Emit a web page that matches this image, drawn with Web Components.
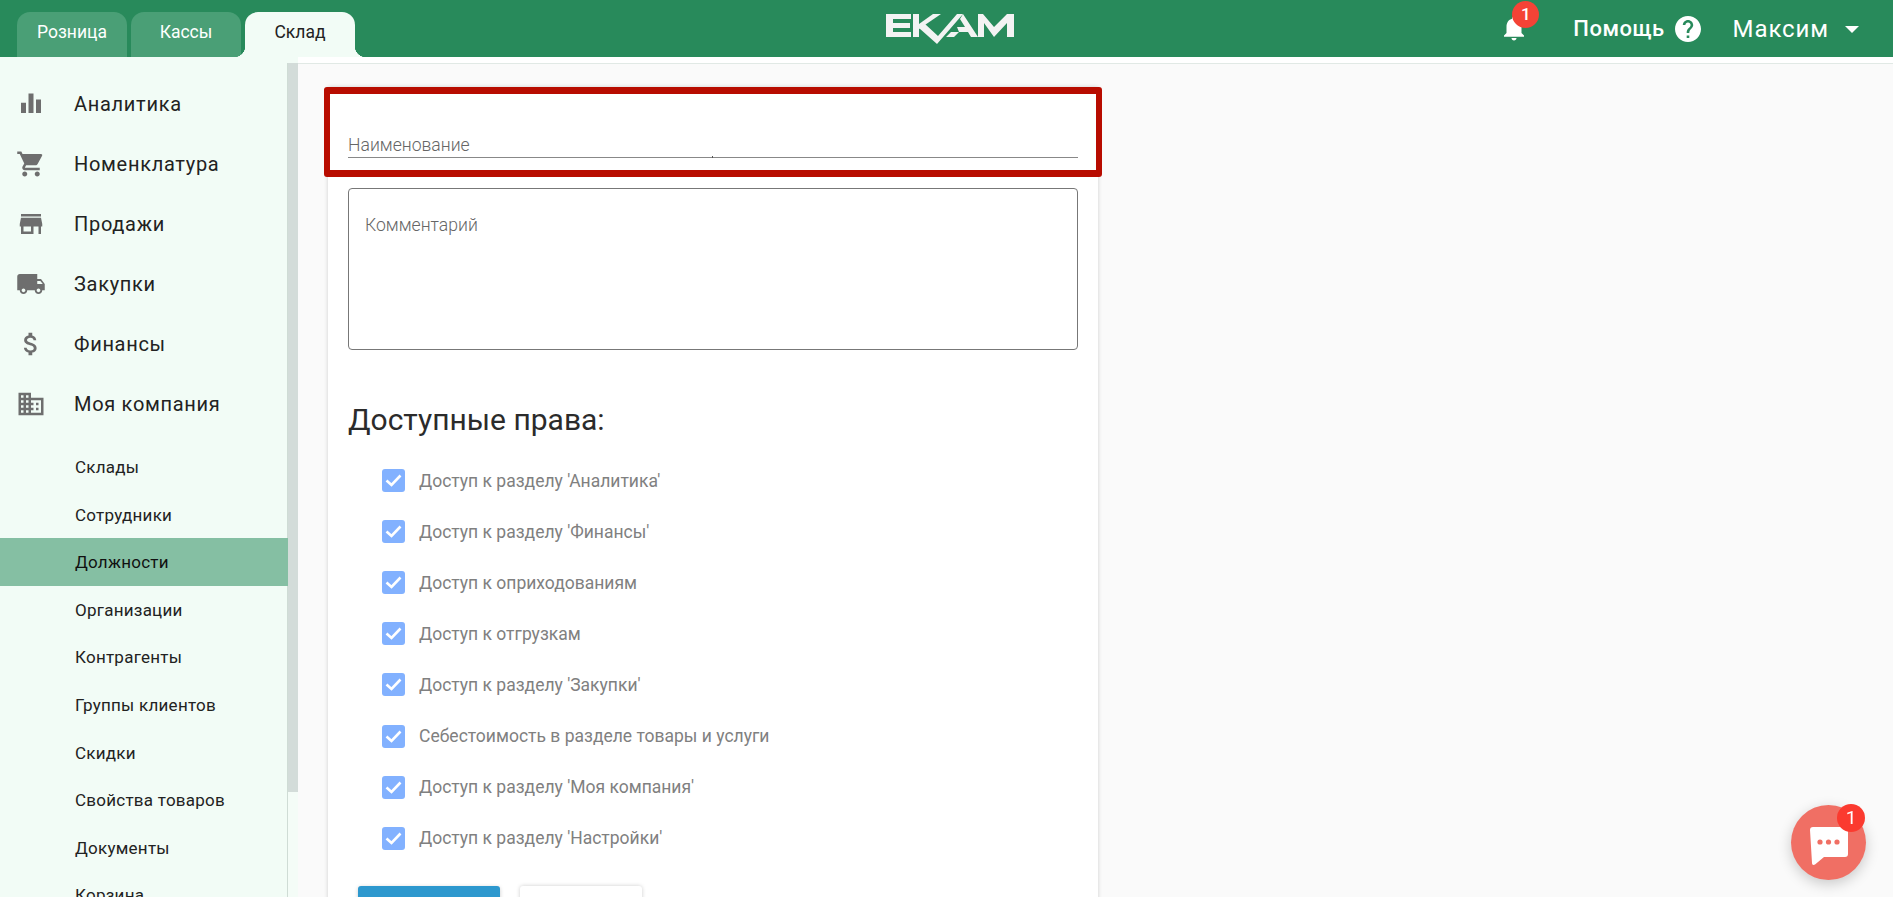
<!DOCTYPE html>
<html lang="ru">
<head>
<meta charset="UTF-8">
<title>Должности</title>
<style>
    html, body { margin: 0; height: 897px; overflow: hidden; background: #fafafa; }
    body { font-family: Roboto, "Liberation Sans", sans-serif; }
</style>
</head>
<body>
<app-shell>
    <top-bar slot="top"></top-bar>
    <side-menu slot="side"></side-menu>
    <role-form></role-form>
</app-shell>
<chat-bubble></chat-bubble>

<script>
    const icons = {
        chart: '<path d="M4 11h4v8.2H4zM10 3.5h4v15.7h-4zM16 8.3h4v10.9h-4z"/>',
        cart: '<path d="M7 18c-1.1 0-2 .9-2 2s.9 2 2 2 2-.9 2-2-.9-2-2-2zM1 2v2h2l3.6 7.59-1.35 2.45c-.16.28-.25.61-.25.96 0 1.1.9 2 2 2h12v-2H7.42c-.14 0-.25-.11-.25-.25l.03-.12.9-1.63h7.45c.75 0 1.41-.41 1.75-1.03l3.58-6.49A1 1 0 0 0 20 4H5.21l-.94-2H1zm16 16c-1.1 0-2 .9-2 2s.9 2 2 2 2-.9 2-2-.9-2-2-2z"/>',
        store: '<path d="M20 4H4v2h16V4zm1 10v-2l-1-5H4l-1 5v2h1v6h10v-6h4v6h2v-6h1zm-9 4H6v-4h6v4z"/>',
        truck: '<path d="M20 8h-3V4H3c-1.1 0-2 .9-2 2v11h2c0 1.66 1.34 3 3 3s3-1.34 3-3h6c0 1.66 1.34 3 3 3s3-1.34 3-3h2v-5l-3-4zM6 18.5c-.83 0-1.5-.67-1.5-1.5s.67-1.5 1.5-1.5 1.5.67 1.5 1.5-.67 1.5-1.5 1.5zm13.5-9l1.96 2.5H17V9.5h2.5zm-1.5 9c-.83 0-1.5-.67-1.5-1.5s.67-1.5 1.5-1.5 1.5.67 1.5 1.5-.67 1.5-1.5 1.5z"/>',
        dollar: '<path d="M11.8 10.9c-2.27-.59-3-1.2-3-2.15 0-1.09 1.01-1.85 2.7-1.85 1.78 0 2.44.85 2.5 2.1h2.21c-.07-1.72-1.12-3.3-3.21-3.81V3h-3v2.16c-1.94.42-3.5 1.68-3.5 3.61 0 2.31 1.91 3.46 4.7 4.13 2.5.6 3 1.48 3 2.41 0 .69-.49 1.79-2.7 1.79-2.06 0-2.87-.92-2.98-2.1h-2.2c.12 2.19 1.76 3.42 3.68 3.83V21h3v-2.15c1.95-.37 3.5-1.5 3.5-3.55 0-2.84-2.43-3.81-4.7-4.4z"/>',
        domain: '<path d="M12 7V3H2v18h20V7H12zM6 19H4v-2h2v2zm0-4H4v-2h2v2zm0-4H4V9h2v2zm0-4H4V5h2v2zm4 12H8v-2h2v2zm0-4H8v-2h2v2zm0-4H8V9h2v2zm0-4H8V5h2v2zm10 12h-8v-2h2v-2h-2v-2h2v-2h-2V9h8v10zm-2-8h-2v2h2v-2zm0 4h-2v2h2v-2z"/>'
    };

    const define = (name, css, html) => {
        customElements.define(name, class extends HTMLElement {
            constructor() {
                super();
                this.attachShadow({ mode: "open" }).innerHTML = "<style>" + css + "</style>" + (typeof html === "function" ? html(this) : html);
            }
        });
    };

    define("app-shell", `
        :host { display: grid; grid-template-columns: 298px 1fr; grid-template-rows: 57px 840px; height: 897px; overflow: hidden; }
        .top { grid-column: 1 / 3; }
        .main { overflow: hidden; background: #fafafa; border-top: 6px solid #fff; box-shadow: inset 0 1px 0 #e1e9e5; }
    `, `
        <div class="top"><slot name="top"></slot></div>
        <slot name="side"></slot>
        <div class="main"><slot></slot></div>
    `);

    define("top-bar", `
        :host { display: flex; align-items: flex-end; height: 57px; background: #288a5b; color: #fff; position: relative; }
        .tabs { display: flex; gap: 4px; padding-left: 17px; }
        .tab { width: 110px; height: 45px; box-sizing: border-box; padding-top: 8px; text-align: center; font-size: 17.5px; line-height: 24px; border-radius: 13px 13px 0 0; background: #4a9f76; }
        .tab.on { background: #f2fcf6; color: #222; position: relative; }
        .tab.on::before, .tab.on::after { content: ""; position: absolute; bottom: 0; width: 11px; height: 11px; }
        .tab.on::before { left: -11px; background: radial-gradient(circle at 0 0, transparent 11px, #f2fcf6 11.5px); }
        .tab.on::after { right: -11px; background: radial-gradient(circle at 100% 0, transparent 11px, #f2fcf6 11.5px); }
        .logo { position: absolute; left: 886px; top: 13px; }
        .right { margin-left: auto; height: 57px; display: flex; align-items: center; }
        .bell { position: relative; width: 30px; height: 30px; margin: -2px 44px 0 0; }
        .bell b { position: absolute; left: 13px; top: -12px; width: 27px; height: 27px; border-radius: 50%; background: #f44336; text-align: center; font: 500 17px/27px Roboto, sans-serif; }
        .help { font-size: 22px; font-weight: 500; letter-spacing: .5px; }
        .q { margin: 0 32px 0 10px; display: block; }
        .user { font-size: 24px; letter-spacing: .9px; }
        .caret { width: 0; height: 0; border: 7px solid transparent; border-top-color: #fff; border-bottom: 0; margin: 2px 34px 0 16px; }
    `, `
        <div class="tabs"><div class="tab">Розница</div><div class="tab">Кассы</div><div class="tab on">Склад</div></div>
        <svg class="logo" width="128" height="32" viewBox="0 0 128 32" fill="#f3f3f3">
            <path d="M0 1H25V6H7V10H24V15H7V19H25V24H0Z"/>
            <path d="M27 1h6v23h-6z"/>
            <path d="M33 11L47 1H55L33 16Z"/>
            <path d="M33 15L39 11L52 23L71 1H77L51 31Z"/>
            <path d="M77 1L92 24H85L82 19H65L60 24H68L73 19L71 14H79L74 6Z"/>
            <path d="M92 1H97L108 14L121 1H128V24H121V10L108 24L98 10V24H92Z"/>
        </svg>
        <div class="right">
            <div class="bell">
                <svg width="30" height="30" viewBox="0 0 24 24" fill="#fff"><path d="M12 22c1.1 0 2-.9 2-2h-4c0 1.1.9 2 2 2zm6-6v-5c0-3.07-1.63-5.64-4.5-6.32V4c0-.83-.67-1.5-1.5-1.5s-1.5.67-1.5 1.5v.68C7.64 5.36 6 7.92 6 11v5l-2 2v1h16v-1l-2-2z"/></svg>
                <b>1</b>
            </div>
            <span class="help">Помощь</span>
            <svg class="q" width="26" height="26" viewBox="2 2 20 20" fill="#fff"><path d="M12 2C6.48 2 2 6.48 2 12s4.48 10 10 10 10-4.48 10-10S17.52 2 12 2zm1 17h-2v-2h2v2zm2.07-7.75l-.9.92C13.45 12.9 13 13.5 13 15h-2v-.5c0-1.1.45-2.1 1.17-2.83l1.24-1.26c.37-.36.59-.86.59-1.41 0-1.1-.9-2-2-2s-2 .9-2 2H8c0-2.21 1.79-4 4-4s4 1.79 4 4c0 .88-.36 1.68-.93 2.25z"/></svg>
            <span class="user">Максим</span>
            <div class="caret"></div>
        </div>
    `);

    define("menu-item", `
        :host { display: flex; align-items: center; height: 60px; color: #222; font-size: 20px; letter-spacing: .7px; }
        svg { width: 30px; height: 30px; fill: #6e6e6e; margin-left: 16px; margin-right: 28px; flex: none; }
    `, (el) => `<svg viewBox="0 0 24 24">${icons[el.getAttribute("icon")]}</svg><slot></slot>`);

    define("sub-item", `
        :host { display: block; height: 47.6px; line-height: 48.6px; padding-left: 75px; color: #222; font-size: 17px; letter-spacing: .25px; }
        :host([active]) { background: #85bfa3; color: #111; margin-right: -1px; }
    `, `<slot></slot>`);

    define("side-menu", `
        :host { display: flex; height: 840px; overflow: hidden; background: #f2fcf6; border-top: 6px solid #f2fcf6; box-sizing: border-box; }
        .list { width: 288px; flex: none; box-sizing: border-box; padding-top: 11px; height: 100%; border-right: 1px solid #cfdcd5; }
        .sub { padding-top: 9px; }
        .track { flex: 1; background: #f4fcf7; }
        .thumb { height: 729px; background: #d3dcd9; }
    `, `
        <div class="list">
            <menu-item icon="chart">Аналитика</menu-item>
            <menu-item icon="cart">Номенклатура</menu-item>
            <menu-item icon="store">Продажи</menu-item>
            <menu-item icon="truck">Закупки</menu-item>
            <menu-item icon="dollar">Финансы</menu-item>
            <menu-item icon="domain">Моя компания</menu-item>
            <div class="sub">
                <sub-item>Склады</sub-item>
                <sub-item>Сотрудники</sub-item>
                <sub-item active>Должности</sub-item>
                <sub-item>Организации</sub-item>
                <sub-item>Контрагенты</sub-item>
                <sub-item>Группы клиентов</sub-item>
                <sub-item>Скидки</sub-item>
                <sub-item>Свойства товаров</sub-item>
                <sub-item>Документы</sub-item>
                <sub-item>Корзина</sub-item>
            </div>
        </div>
        <div class="track"><div class="thumb"></div></div>
    `);

    define("check-row", `
        :host { display: flex; align-items: center; height: 51.1px; color: #808080; font-size: 17.5px; padding-left: 54px; }
        .box { width: 23px; height: 23px; border-radius: 3px; background: #82b1ff; margin-right: 14px; flex: none; display: flex; align-items: center; justify-content: center; }
    `, `
        <div class="box"><svg width="17" height="13" viewBox="0 0 17 13" fill="none" stroke="#fff" stroke-width="2.6"><path d="M1.5 6.5l5 4.5 9-9.5"/></svg></div>
        <slot></slot>
    `);

    define("role-form", `
        :host { display: block; width: 770px; margin: 24px 0 0 30px; height: 830px; background: #fff; box-shadow: 0 0 4px rgba(0,0,0,.18); box-sizing: border-box; }
        .name { margin: 0 -4px; height: 90px; box-sizing: border-box; border-style: solid; border-color: #b80c00; border-width: 7px 6px; border-radius: 3px; background: #fff; padding: 40px 18px 0; position: relative; }
        .name div { height: 23px; line-height: 22px; font-size: 17.6px; font-weight: 300; color: #666; border-bottom: 1px solid #888; }
        .name i { position: absolute; left: 382px; top: 62px; width: 1px; height: 2px; background: #555; }
        .area { margin: 11px 20px 0; height: 162px; box-sizing: border-box; border: 1px solid #777; border-radius: 4px; padding: 25px 16px; font-size: 17.6px; font-weight: 300; color: #666; line-height: 22px; }
        h2 { margin: 0 20px; padding-top: 52px; font-size: 30px; line-height: 36px; font-weight: 400; color: #2b2b2b; }
        .list { padding-top: 17px; }
        .buttons { display: flex; gap: 20px; padding: 22px 30px 0; }
        .btn { height: 60px; border-radius: 3px; }
        .save { width: 142px; background: #2d98ce; box-shadow: 0 1px 4px rgba(0,0,0,.2); }
        .cancel { width: 122px; background: #fff; box-shadow: 0 0 4px rgba(0,0,0,.2); }
    `, `
        <div class="name"><div>Наименование</div><i></i></div>
        <div class="area">Комментарий</div>
        <h2>Доступные права:</h2>
        <div class="list">
            <check-row>Доступ к разделу 'Аналитика'</check-row>
            <check-row>Доступ к разделу 'Финансы'</check-row>
            <check-row>Доступ к оприходованиям</check-row>
            <check-row>Доступ к отгрузкам</check-row>
            <check-row>Доступ к разделу 'Закупки'</check-row>
            <check-row>Себестоимость в разделе товары и услуги</check-row>
            <check-row>Доступ к разделу 'Моя компания'</check-row>
            <check-row>Доступ к разделу 'Настройки'</check-row>
        </div>
        <div class="buttons"><div class="btn save"></div><div class="btn cancel"></div></div>
    `);

    define("chat-bubble", `
        :host { position: fixed; left: 1791px; top: 805px; width: 75px; height: 75px; border-radius: 50%; background: #f06f64; box-shadow: 0 4px 14px rgba(0,0,0,.2); display: flex; align-items: center; justify-content: center; }
        svg { margin-top: 6px; }
        b { position: absolute; left: 46px; top: -1px; width: 28px; height: 28px; border-radius: 50%; background: #fb3a2f; color: #fff; text-align: center; font: 400 19px/28px Roboto, sans-serif; }
    `, `
        <svg width="38" height="38" viewBox="0 0 38 38"><path d="M3 0h32a3 3 0 0 1 3 3v24a3 3 0 0 1-3 3H14l-9 7.5c-1.5 1-3 .5-3-1.5L0 3a3 3 0 0 1 3-3z" fill="#fff"/><circle cx="10" cy="15" r="2.6" fill="#f06f64"/><circle cx="18.5" cy="15" r="2.6" fill="#f06f64"/><circle cx="27" cy="15" r="2.6" fill="#f06f64"/></svg>
        <b>1</b>
    `);
</script>
</body>
</html>
